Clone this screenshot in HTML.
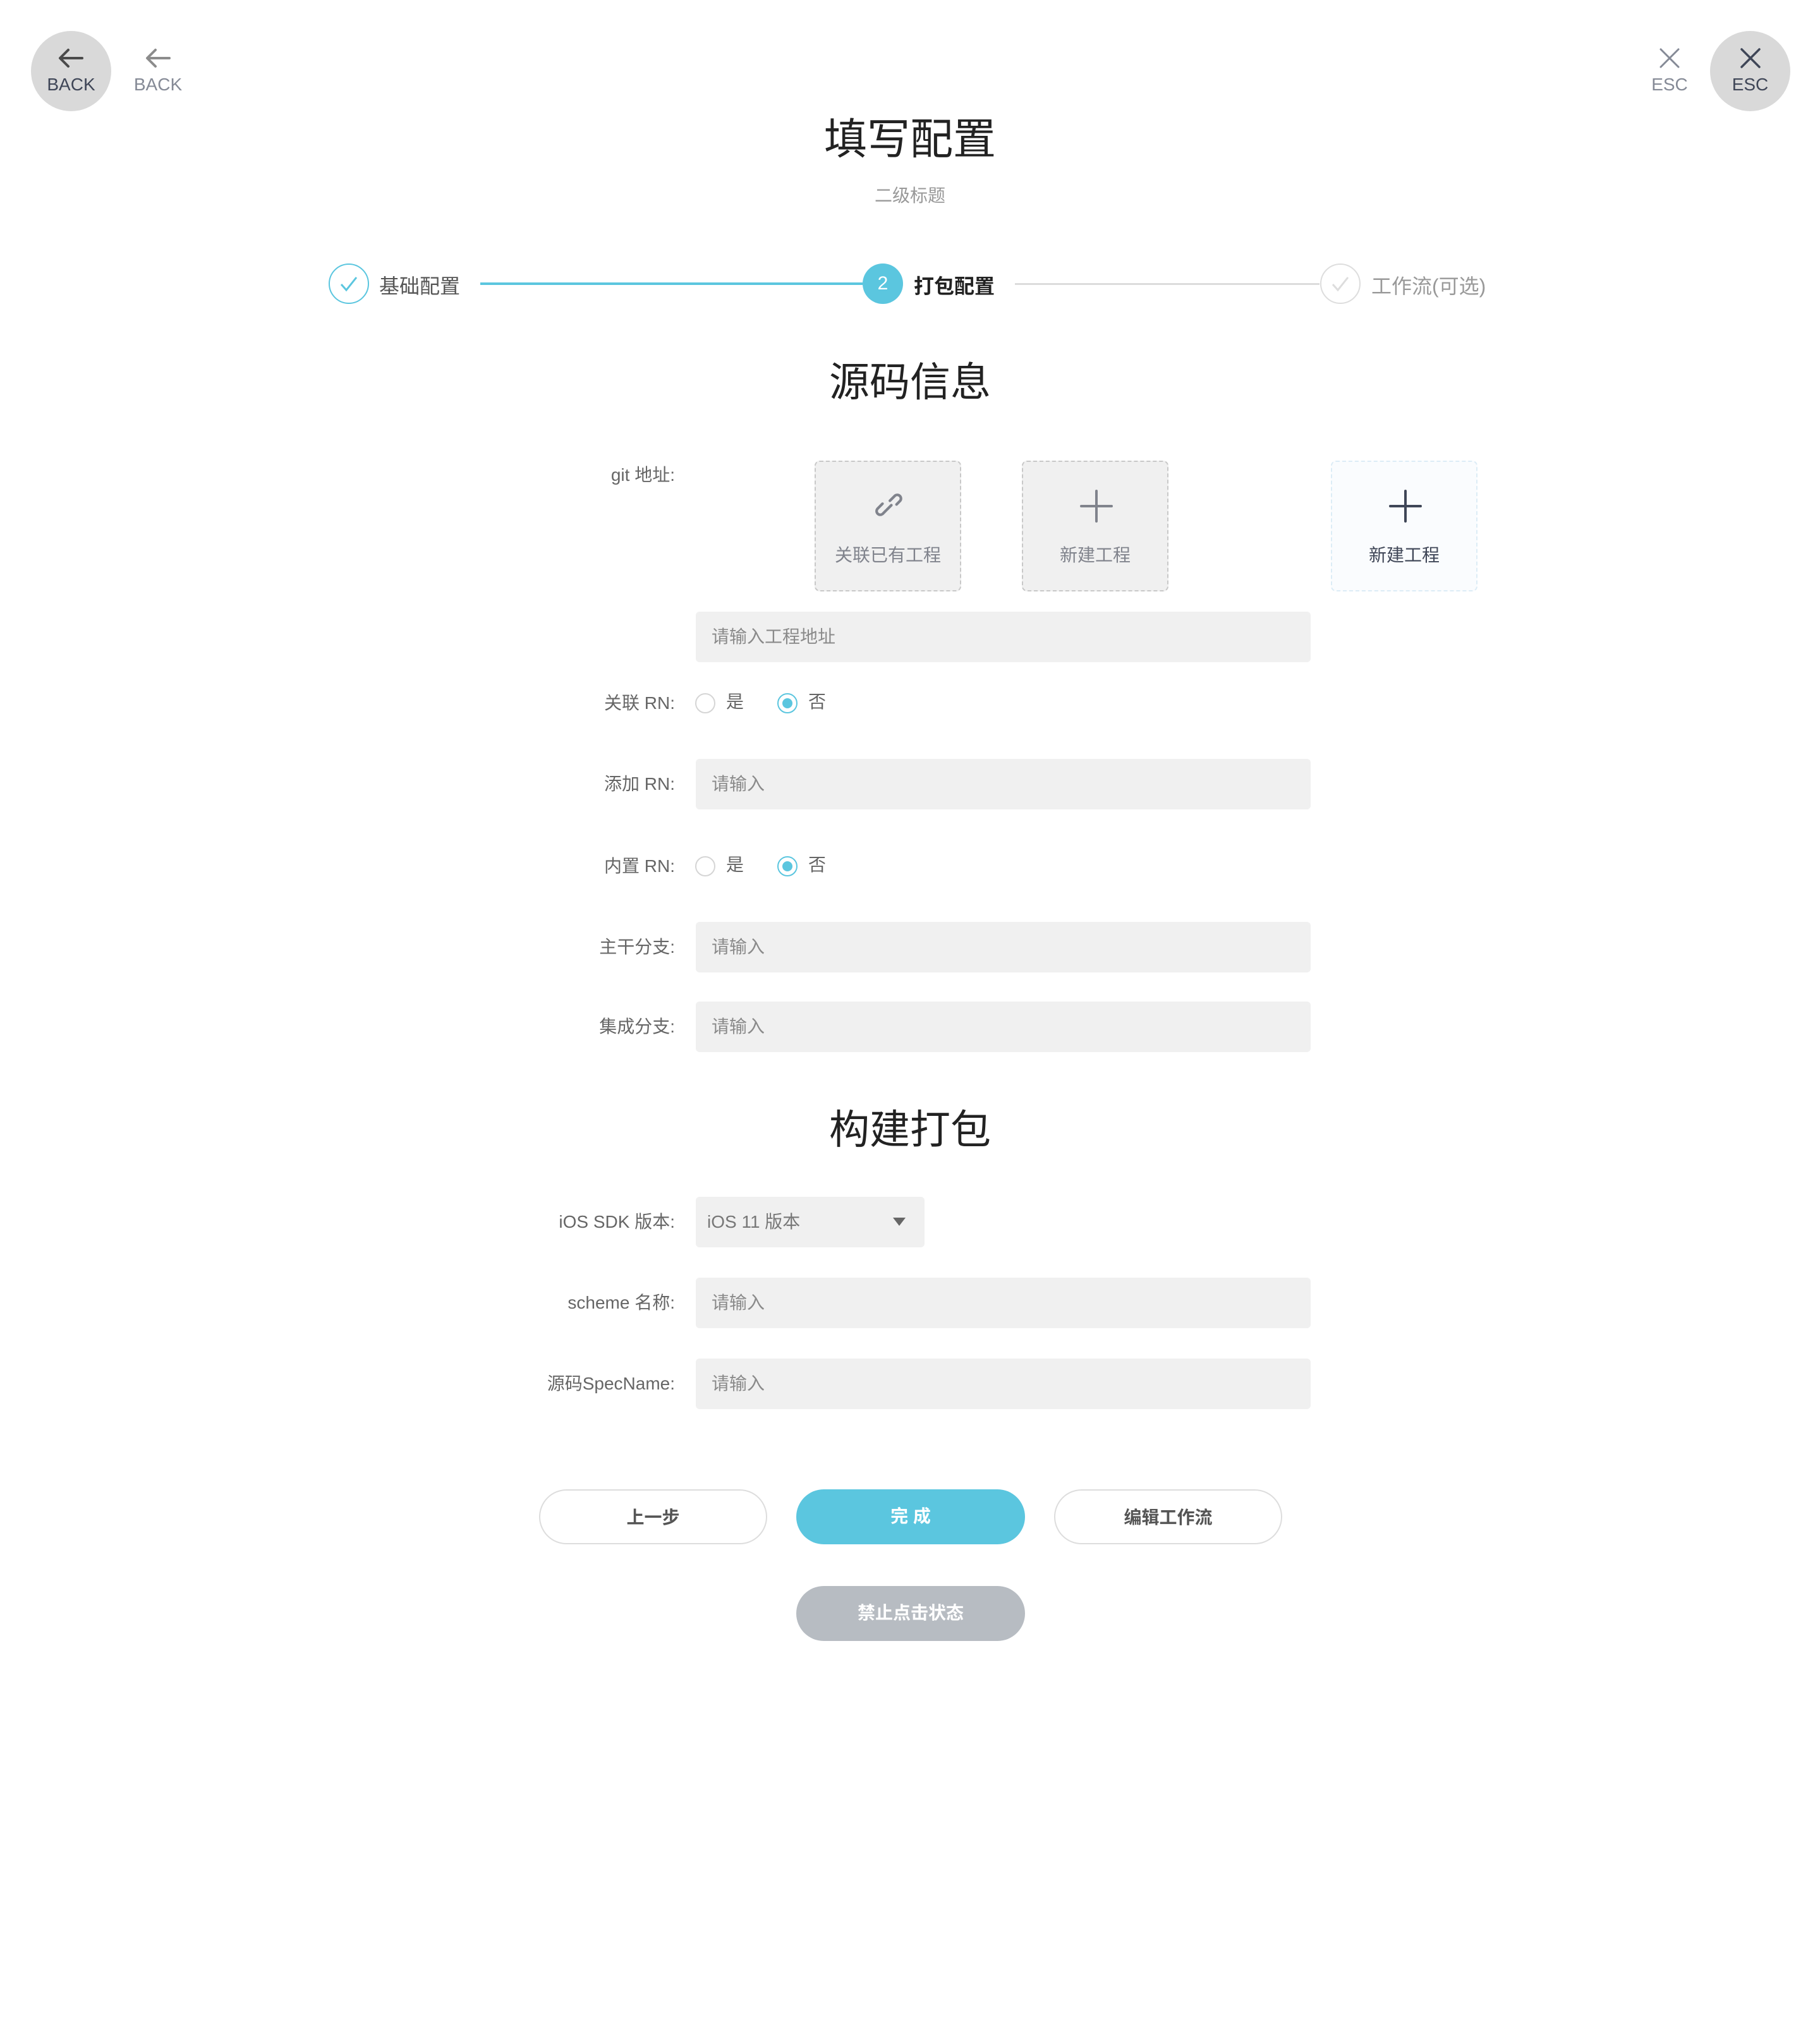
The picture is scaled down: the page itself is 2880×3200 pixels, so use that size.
<!DOCTYPE html>
<html><head><meta charset="utf-8">
<style>
*{margin:0;padding:0;box-sizing:border-box}
body{width:2880px;height:3200px;background:#fff;position:relative;overflow:hidden;font-family:"Liberation Sans","Noto Sans CJK SC",sans-serif;color:#333}
.a{position:absolute}
.c{text-align:center}
.lbl{position:absolute;right:1812px;font-size:28px;color:#666;line-height:40px;white-space:nowrap}
.inp{position:absolute;left:1101px;width:973px;height:80px;background:#f0f0f0;border-radius:6px;font-size:28px;color:#8a8a8a;line-height:80px;padding-left:25px}
.card{position:absolute;top:729px;width:232px;height:207px;border:2px dashed #c8c8c8;border-radius:8px;background:#f0f0f0}
.card .t{position:absolute;left:0;right:0;top:126px;text-align:center;font-size:28px;color:#80838c}
.radio{position:absolute;width:32px;height:32px;border-radius:50%;border:2px solid #d5d5d5}
.radio.on{border-color:#5bc6df}
.radio.on:after{content:"";position:absolute;left:6px;top:6px;width:16px;height:16px;border-radius:50%;background:#5bc6df}
.rt{position:absolute;font-size:28px;color:#666;line-height:40px}
.btn{position:absolute;height:87px;border-radius:44px;font-size:28px;font-weight:bold;text-align:center;line-height:85px}
</style></head><body>

<div class="a" style="left:49px;top:49px;width:127px;height:127px;border-radius:50%;background:#d9d9d9"></div>
<svg class="a" style="left:90px;top:74px" width="44" height="36" viewBox="0 0 44 36"><path d="M40 18H6M18 5L5 18L18 31" fill="none" stroke="#4a4a4a" stroke-width="4" stroke-linecap="round" stroke-linejoin="round"/></svg>
<div class="a c" style="left:49px;width:127px;top:118px;font-size:28px;color:#3f4657">BACK</div>
<svg class="a" style="left:228px;top:74px" width="44" height="36" viewBox="0 0 44 36"><path d="M40 18H6M18 5L5 18L18 31" fill="none" stroke="#8c8c8c" stroke-width="4" stroke-linecap="round" stroke-linejoin="round"/></svg>
<div class="a c" style="left:200px;width:100px;top:118px;font-size:28px;color:#858a96">BACK</div>

<div class="a" style="left:2706px;top:49px;width:127px;height:127px;border-radius:50%;background:#d9d9d9"></div>
<svg class="a" style="left:2752px;top:74px" width="36" height="36" viewBox="0 0 36 36"><path d="M4 4L32 32M32 4L4 32" stroke="#3f4657" stroke-width="3.5" stroke-linecap="round"/></svg>
<div class="a c" style="left:2706px;width:127px;top:118px;font-size:28px;color:#3f4657">ESC</div>
<svg class="a" style="left:2624px;top:74px" width="36" height="36" viewBox="0 0 36 36"><path d="M4 4L32 32M32 4L4 32" stroke="#858a96" stroke-width="3" stroke-linecap="round"/></svg>
<div class="a c" style="left:2592px;width:100px;top:118px;font-size:28px;color:#858a96">ESC</div>

<div class="a c" style="left:0;width:2880px;top:176px;font-size:68px;color:#222;line-height:90px">填写配置</div>
<div class="a c" style="left:0;width:2880px;top:288px;font-size:28px;color:#999">二级标题</div>

<!-- steps -->
<div class="a" style="left:520px;top:417px;width:64px;height:64px;border-radius:50%;border:2px solid #5bc6df"></div>
<svg class="a" style="left:536px;top:434px" width="32" height="30"><path d="M4 16L12 25L28 5" fill="none" stroke="#5bc6df" stroke-width="3"/></svg>
<div class="a" style="left:600px;top:428px;font-size:32px;color:#555">基础配置</div>
<div class="a" style="left:760px;top:447px;width:605px;height:4px;background:#5bc6df"></div>
<div class="a c" style="left:1365px;top:417px;width:64px;height:64px;border-radius:50%;background:#5bc6df;color:#fff;font-size:30px;line-height:64px">2</div>
<div class="a" style="left:1446px;top:428px;font-size:32px;color:#222;font-weight:bold">打包配置</div>
<div class="a" style="left:1606px;top:448px;width:482px;height:3px;background:#dcdcdc"></div>
<div class="a" style="left:2089px;top:417px;width:64px;height:64px;border-radius:50%;border:2px solid #ddd"></div>
<svg class="a" style="left:2105px;top:434px" width="32" height="30"><path d="M4 16L12 25L28 5" fill="none" stroke="#ddd" stroke-width="3"/></svg>
<div class="a" style="left:2170px;top:428px;font-size:32px;color:#999">工作流(可选)</div>

<div class="a c" style="left:0;width:2880px;top:560px;font-size:64px;color:#222;line-height:90px">源码信息</div>

<div class="lbl" style="top:732px">git 地址:</div>
<div class="card" style="left:1289px">
 <svg class="a" style="left:88px;top:44px" width="56" height="56" viewBox="0 0 24 24"><g fill="none" stroke="#80838c" stroke-width="1.8" stroke-linecap="round"><path d="M10 14l-2.5 2.5a2.5 2.5 0 0 1-3.5-3.5L7.5 9.5"/><path d="M14 10l2.5-2.5a2.5 2.5 0 0 0-3.5-3.5L9.5 7.5" transform="translate(3 0)"/><path d="M10.5 13.5l3-3"/></g></svg>
 <div class="t">关联已有工程</div></div>
<div class="card" style="left:1617px">
 <svg class="a" style="left:90px;top:44px" width="52" height="52"><path d="M26 2V50M2 26H50" stroke="#80838c" stroke-width="4" stroke-linecap="round"/></svg>
 <div class="t">新建工程</div></div>
<div class="card" style="left:2106px;background:#fafcfe;border-color:#dcecf6">
 <svg class="a" style="left:90px;top:44px" width="52" height="52"><path d="M26 2V50M2 26H50" stroke="#3f4657" stroke-width="4" stroke-linecap="round"/></svg>
 <div class="t" style="color:#3f4657">新建工程</div></div>

<div class="inp" style="top:968px">请输入工程地址</div>

<div class="lbl" style="top:1093px">关联 RN:</div>
<div class="radio" style="left:1100px;top:1097px"></div><div class="rt" style="left:1149px;top:1091px">是</div>
<div class="radio on" style="left:1230px;top:1097px"></div><div class="rt" style="left:1279px;top:1091px">否</div>

<div class="lbl" style="top:1221px">添加 RN:</div>
<div class="inp" style="top:1201px">请输入</div>

<div class="lbl" style="top:1351px">内置 RN:</div>
<div class="radio" style="left:1100px;top:1355px"></div><div class="rt" style="left:1149px;top:1349px">是</div>
<div class="radio on" style="left:1230px;top:1355px"></div><div class="rt" style="left:1279px;top:1349px">否</div>

<div class="lbl" style="top:1479px">主干分支:</div>
<div class="inp" style="top:1459px">请输入</div>
<div class="lbl" style="top:1605px">集成分支:</div>
<div class="inp" style="top:1585px">请输入</div>

<div class="a c" style="left:0;width:2880px;top:1743px;font-size:64px;color:#222;line-height:90px">构建打包</div>

<div class="lbl" style="top:1914px">iOS SDK 版本:</div>
<div class="inp" style="top:1894px;width:362px;padding-left:18px;color:#777">iOS 11 版本</div>
<svg class="a" style="left:1413px;top:1927px" width="20" height="14"><path d="M0 0H20L10 13Z" fill="#666"/></svg>

<div class="lbl" style="top:2042px">scheme 名称:</div>
<div class="inp" style="top:2022px">请输入</div>
<div class="lbl" style="top:2170px">源码SpecName:</div>
<div class="inp" style="top:2150px">请输入</div>

<div class="btn" style="left:853px;top:2357px;width:361px;border:2px solid #ddd;color:#555">上一步</div>
<div class="btn" style="left:1260px;top:2357px;width:362px;background:#5bc6df;color:#fff">完 成</div>
<div class="btn" style="left:1668px;top:2357px;width:361px;border:2px solid #ddd;color:#555">编辑工作流</div>
<div class="btn" style="left:1260px;top:2510px;width:362px;background:#b7bcc2;color:#fff">禁止点击状态</div>

</body></html>
